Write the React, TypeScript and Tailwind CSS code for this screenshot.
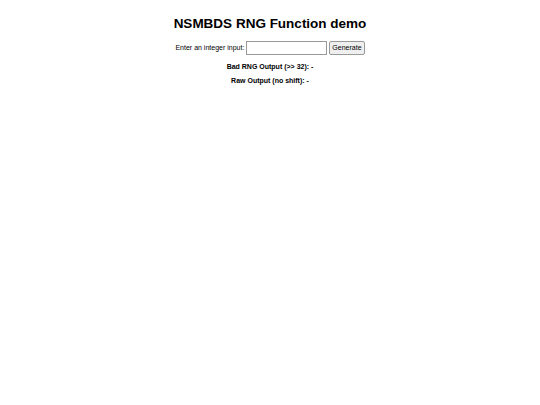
export default function App() {
  return (
    <div className="min-h-[405px] w-full bg-white pt-[15px] text-center text-black" style={{ fontFamily: '"Liberation Sans", Arial, sans-serif' }}>
      <h1 className="text-[13.5px] font-bold leading-[17px]">NSMBDS RNG Function demo</h1>
      <div className="mt-[9px] flex items-center justify-center gap-[2px] text-[7px]">
        <label htmlFor="num">Enter an integer input:</label>
        <input id="num" type="text" className="h-[14px] w-[81px] border border-[#999] bg-white px-[2px] text-[7px] outline-none" />
        <button className="h-[14px] rounded-[2px] border border-[#999] bg-[#efefef] px-[2px] text-[7px]">Generate</button>
      </div>
      <p className="mt-[7px] text-[7px] font-bold leading-[9px]">Bad RNG Output (&gt;&gt; 32): -</p>
      <p className="mt-[5px] text-[7px] font-bold leading-[9px]">Raw Output (no shift): -</p>
    </div>
  );
}
